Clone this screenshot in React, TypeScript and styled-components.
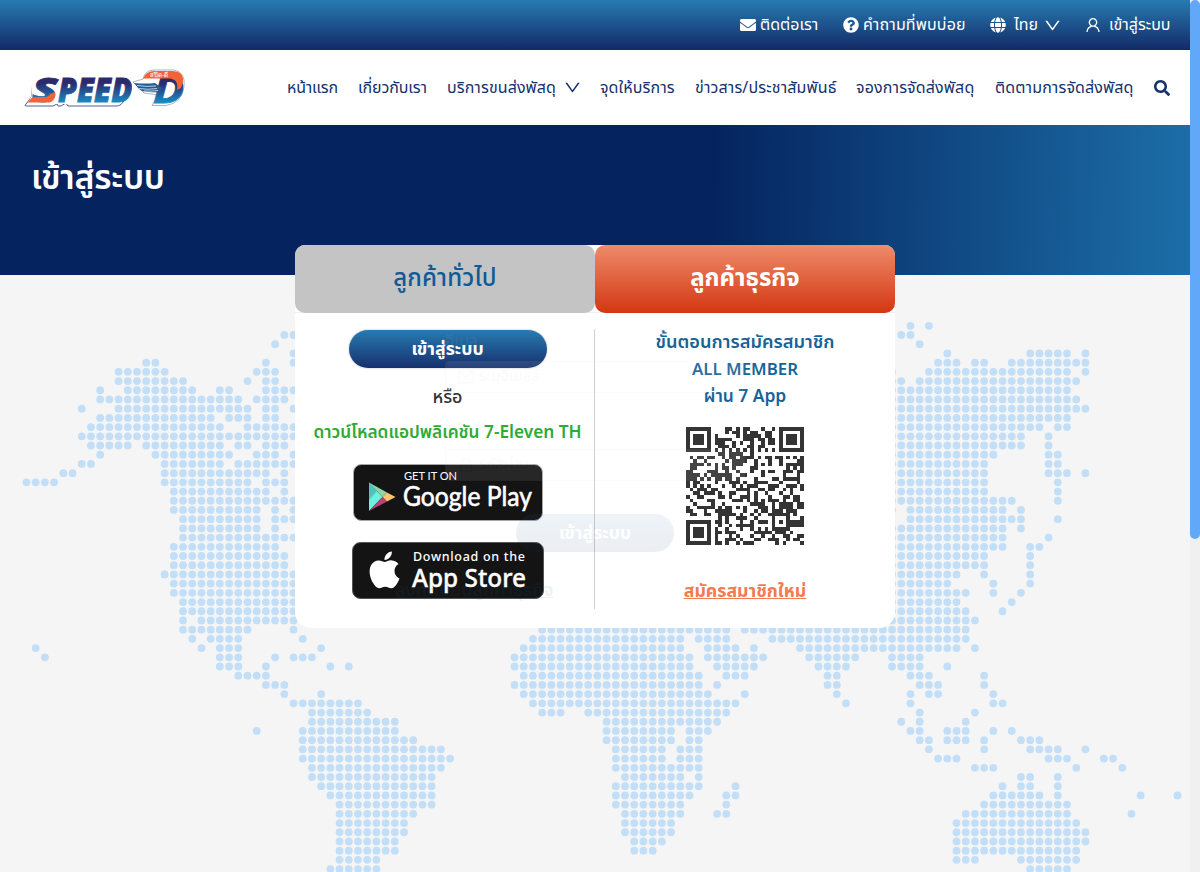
import React from "react";
import styled, { createGlobalStyle } from "styled-components";
import { FaEnvelope, FaQuestionCircle, FaGlobe, FaSearch } from "react-icons/fa";
import { AiOutlineDown, AiOutlineLock, AiOutlineMail, AiOutlineUser } from "react-icons/ai";

const thai = `"Noto Sans Thai", "Prompt", "Noto Sans", "Open Sans", sans-serif`;

const Global = createGlobalStyle`
  * { box-sizing: border-box; }
  html, body { margin: 0; height: 100%; overflow: hidden; }
  body { font-family: ${thai}; background: #f5f5f5; }
`;

const Shell = styled.div`
  display: flex;
  height: 872px;
  overflow: hidden;
`;
const Page = styled.div`
  flex: 1;
  min-width: 0;
  display: flex;
  flex-direction: column;
`;
const ScrollTrack = styled.div`
  width: 10px;
  background: #f0f0f0;
`;
const ScrollThumb = styled.div`
  height: 539px;
  border-radius: 5px;
  background: #62a8f8;
`;
const TopBar = styled.div`
  height: 50px;
  flex: none;
  padding: 0 20px;
  display: flex;
  justify-content: flex-end;
  align-items: center;
  gap: 24px;
  color: #fff;
  background: linear-gradient(#277bb1, #132a66);
`;
const Item = styled.div<{ $gap?: number }>`
  display: flex;
  align-items: center;
  gap: ${(p) => p.$gap ?? 4}px;
  svg {
    flex: none;
  }
`;
const Chevron = styled(AiOutlineDown)`
  width: 19px;
  height: 19px;
  margin: 0 -1.5px 0 -4.5px;
`;
const UserIcon = styled(AiOutlineUser)`
  width: 18px;
  height: 18px;
`;
const NavBar = styled.div`
  height: 75px;
  flex: none;
  padding: 0 20px 0 24px;
  display: flex;
  align-items: center;
  background: #fff;
  color: #14316b;
`;
const NavLinks = styled.div`
  margin-left: auto;
  display: flex;
  align-items: center;
  gap: 20px;
`;
const Label = styled.span<{ $w: number; $ls?: number }>`
  width: ${(p) => p.$w}px;
  font-size: 16px;
  letter-spacing: ${(p) => p.$ls ?? 0}px;
  line-height: 24px;
  white-space: nowrap;
`;
const Hero = styled.div`
  height: 150px;
  flex: none;
  padding: 28px 31px;
  background: linear-gradient(91deg, #05245f 60%, #1c6ea8 100%);
`;
const Title = styled.h1`
  margin: 0;
  color: #fff;
  font-size: 34px;
  font-weight: 600;
  letter-spacing: -0.25px;
  line-height: 52px;
  white-space: nowrap;
`;
const Body = styled.div`
  position: relative;
  height: 597px;
  flex: none;
  background: #f5f5f5;
`;
const MapLayer = styled.svg`
  position: absolute;
  inset: 0;
`;
const Card = styled.div`
  position: relative;
  width: 600px;
  height: 383px;
  margin: -30px auto 0;
  border-radius: 10px 10px 16px 16px;
  background: #fff;
`;
const Tabs = styled.div`
  display: flex;
  height: 68px;
  border-bottom: 1px solid #f0f0f0;
`;
const Tab = styled.div<{ $active?: boolean }>`
  flex: 1;
  height: 68px;
  border-radius: 10px;
  display: flex;
  justify-content: center;
  align-items: center;
  font-size: 24px;
  font-weight: ${(p) => (p.$active ? 700 : 500)};
  letter-spacing: ${(p) => (p.$active ? 0 : 0.15)}px;
  color: ${(p) => (p.$active ? "#fff" : "#0c5b96")};
  background: ${(p) => (p.$active ? "linear-gradient(#ee8b6b, #d33711)" : "#c4c4c4")};
  white-space: nowrap;
`;
const Columns = styled.div`
  display: flex;
  padding-top: 16px;
`;
const Left = styled.div`
  width: 300px;
  height: 280px;
  border-right: 1px solid #cfcfcf;
  display: flex;
  flex-direction: column;
  align-items: center;
  padding-left: 6px;
  white-space: nowrap;
`;
const Right = styled.div`
  width: 300px;
  display: flex;
  flex-direction: column;
  align-items: center;
  white-space: nowrap;
`;
const Pill = styled.div<{ $w: number }>`
  width: ${(p) => p.$w}px;
  height: 38px;
  flex: none;
  margin-top: 1px;
  padding-top: 1px;
  border-radius: 19px;
  display: flex;
  align-items: center;
  justify-content: center;
  color: #fff;
  font-size: 17.7px;
  font-weight: 700;
  background: linear-gradient(#277bb1, #17306d);
  box-shadow: 0 0 2px rgba(0, 0, 0, 0.35);
`;
const Or = styled.div`
  margin-top: 18px;
  font-size: 18px;
  font-weight: 500;
  line-height: 24px;
  color: #333;
`;
const Download = styled.div`
  margin-top: 11px;
  font-size: 17.25px;
  font-weight: 600;
  line-height: 24px;
  color: #2eab33;
`;
const Store = styled.svg<{ $top: number }>`
  flex: none;
  margin-top: ${(p) => p.$top}px;
`;
const Step = styled.div<{ $size: number }>`
  height: 27px;
  font-size: ${(p) => p.$size}px;
  font-weight: 600;
  line-height: 27px;
  color: #176397;
`;
const FirstStep = styled(Step)`
  line-height: 25px;
`;
const Steps = styled.div`
  padding-top: 1px;
  text-align: center;
`;
const Code = styled.svg`
  margin-top: 16px;
`;
const Join = styled.div`
  margin-top: 34px;
  font-size: 17.7px;
  font-weight: 700;
  line-height: 26px;
  color: #f47a52;
  text-decoration: underline;
`;
/* Outgoing business form, still fading while the general tab is shown */
const Fading = styled.div`
  position: absolute;
  left: 150px;
  top: 84px;
  width: 300px;
  display: flex;
  flex-direction: column;
  opacity: 0.08;
  font-size: 16px;
  line-height: 24px;
  color: #ccc;
  white-space: nowrap;
  pointer-events: none;
`;
const Field = styled.div`
  height: 32px;
  margin: 8px 0 24px;
  padding-left: 11px;
  border: 1px solid #d9d9d9;
  border-radius: 4px;
  display: flex;
  align-items: center;
  gap: 4px;
  font-size: 15px;
  background: #fff;
`;
const FadingPill = styled(Pill)`
  margin: 9px 0 0 71px;
  box-shadow: none;
`;
const FadingLink = styled.div`
  margin: 27px 0 0 -50px;
  font-size: 18px;
  font-weight: 600;
  color: #176397;
  text-decoration: underline;
`;

type Run = number | [number, number];
const mapRows: Run[][] = [
  [96, 98],
  [28, 29, 95, 96],
  [27, 97],
  [29, 100, [109, 113], 115],
  [13, 14, 26, 29, [99, 101], 103, 104, [107, 115]],
  [[10, 15], [25, 27], 94, [98, 113], 115],
  [[10, 17], 24, 26, 27, 94, 95, [97, 114]],
  [8, [11, 18], 21, 22, [26, 29], [94, 113]],
  [[8, 23], [25, 28], [94, 114]],
  [6, [10, 24], 26, 27, 29, [94, 115]],
  [[8, 20], [22, 24], 26, 27, [94, 113]],
  [[7, 21], [24, 29], [94, 110], 112, 113],
  [[6, 29], [94, 108], 111],
  [[7, 11], [13, 21], 23, 24, [26, 28], [94, 108], 111],
  [8, [14, 22], [25, 27], 29, [94, 105], 111, 112],
  [6, 7, [15, 21], [23, 29], [94, 104], 111, 112],
  [4, 5, [15, 26], 28, [94, 104], [111, 113], 115],
  [[0, 3], [15, 24], [26, 28], [94, 104], 112],
  [[16, 26], 28, [94, 104], 112],
  [[16, 29], [94, 107], 112],
  [[16, 25], 27, 29, 94, [96, 106], 108],
  [[17, 25], [27, 29], [96, 108], 112],
  [[17, 25], 27, [94, 106], 108],
  [[17, 29], [94, 106], 111],
  [[16, 27], [94, 106], 109, 110],
  [[16, 28], [94, 104], 109],
  [[16, 28], [94, 104], 109],
  [[15, 29], [94, 101], 104, 109],
  [[16, 29], [94, 100], 105, 109],
  [[16, 29], [94, 102], 105, 108],
  [[17, 29], [94, 101], 107],
  [[17, 29], [94, 102], 106],
  [17, [19, 29], [94, 103]],
  [[17, 24], 29, [56, 76], [78, 102]],
  [18, [20, 23], 30, [55, 71], [73, 76], [81, 102]],
  [1, 19, [21, 23], 32, [54, 71], [74, 77], 79, [84, 101], 103],
  [2, [21, 23], 27, [29, 31], [53, 72], [74, 80], [85, 90], [94, 97]],
  [[21, 23], 26, 33, 35, [53, 72], [75, 79], [86, 89], [94, 97], 100],
  [[23, 26], [54, 73], [76, 78], 87, 88, [96, 98], 104],
  [[26, 28], [53, 73], 75, 87, 88, [97, 99], 104],
  [28, 32, [54, 74], 78, 88, 96, 98, 99, 105],
  [[29, 36], [55, 77], 89, 96, 105, 106],
  [[31, 37], [56, 58], [61, 76], 97, 103],
  [[31, 40], [63, 75], 95, 97, 102],
  [25, [30, 40], [63, 70], [72, 74], 96, 97, [100, 102], 105, 107],
  [[30, 42], [63, 70], 72, 73, 97, 98, [100, 102], 104, [108, 110]],
  [[30, 45], [64, 69], [71, 73], 98, 104, [109, 112], 115],
  [[30, 46], [64, 69], [71, 73], [99, 101], [111, 113], 117, 118],
  [[31, 45], [64, 73], [103, 105], 114, 119],
  [[31, 44], [65, 71], 73, 108, 109, 112],
  [[32, 44], [64, 73], 77, 106, 108, 109, 112],
  [[33, 44], [64, 72], 76, 77, [105, 110], 112, 121, 125],
  [[34, 44], [64, 71], 76, [104, 113]],
  [[34, 42], [65, 71], 75, 76, [102, 113], 120],
  [[34, 41], [65, 70], [101, 114]],
  [[34, 41], [65, 70], [101, 115]],
  [[34, 40], [66, 69], [101, 115]],
  [[34, 40], [66, 68], [101, 114]],
  [[34, 38], [101, 103], [108, 114]],
  [[33, 38], [109, 113]],
];
const PITCH = 9.208;

const WorldMap = () => (
  <MapLayer width="1190" height="597" fill="#c3dff7">
    {mapRows.flatMap((row, r) =>
      row.flatMap((run) => {
        const [a, b] = typeof run === "number" ? [run, run] : run;
        return Array.from({ length: b - a + 1 }, (_, i) => (
          <circle key={`${r}-${a + i}`} cx={26.5 + (a + i) * PITCH} cy={50.8 + r * PITCH} r="3.9" />
        ));
      })
    )}
  </MapLayer>
);

const QR_SIZE = 33;
const ring = (x: number, y: number, cx: number, cy: number) => Math.max(Math.abs(x - cx), Math.abs(y - cy));
const isDark = (x: number, y: number) => {
  for (const [cx, cy] of [[3, 3], [29, 3], [3, 29]]) {
    const d = ring(x, y, cx, cy);
    if (d <= 4) return d !== 2 && d !== 4;
  }
  const a = ring(x, y, 26, 26);
  if (a <= 2) return a !== 1;
  if (x === 6 || y === 6) return (x + y) % 2 === 0;
  let h = (x * 374761393 + y * 668265263) | 0;
  h = Math.imul(h ^ (h >>> 13), 1274126177);
  return ((h ^ (h >>> 16)) & 1) === 1;
};
const QrCode = () => {
  let d = "";
  for (let y = 0; y < QR_SIZE; y++) {
    for (let x = 0; x < QR_SIZE; x++) if (isDark(x, y)) d += `M${x} ${y}h1v1h-1z`;
  }
  return (
    <Code width="118" height="118" viewBox={`0 0 ${QR_SIZE} ${QR_SIZE}`} shapeRendering="crispEdges">
      <path d={d} fill="#343434" />
    </Code>
  );
};

const Logo = () => (
  <svg width="176" height="56" viewBox="0 -10 176 56">
    <defs>
      <linearGradient id="ink" gradientUnits="userSpaceOnUse" x1="0" y1="8" x2="0" y2="34">
        <stop offset="0.2" stopColor="#2b2a6c" />
        <stop offset="0.95" stopColor="#1a8cc4" />
      </linearGradient>
    </defs>
    <path d="M1 35.500L8 26L8 9L36 7L100 7Q111 12 106 24L97 34.500Q95 36 92 36H44L42 33L37 36H34L33 34L29 36H2Z" fill="#fff" stroke="#55628c" strokeWidth="1" />
    <path d="M4 33L8 25L6 6L36 5L100 5.500Q110 10 105 23L95 34H8Z" fill="#fff" />
    <path d="M109 12L119 9Q121 0 130 0H150Q162 2 160 17Q158 33 142 35.500H128L134 25L120 23Z" fill="#fff" stroke="#8a93b0" strokeWidth="0.7" />
    <g fontFamily="Noto Sans" fontWeight="900" fontStyle="italic" fill="url(#ink)" stroke="url(#ink)" strokeWidth="0.8">
      <text x="8" y="32" fontSize="33" textLength="26" lengthAdjust="spacingAndGlyphs">S</text>
      <text x="34" y="32" fontSize="33" textLength="74" lengthAdjust="spacingAndGlyphs">PEED</text>
      <text x="129" y="32.500" fontSize="35" fontWeight="700" textLength="31" lengthAdjust="spacingAndGlyphs">D</text>
    </g>
    <path d="M3.500 32.500L8.500 27H22Q25 26.500 26 24L31 22Q32 30 26 32.500Z" fill="#f26438" />
    <path d="M119 8.500Q122 1 130 1H148Q160 1 159 12L157 18L153 20Q155 9 145 8.500Z" fill="#f26438" />
    <path d="M110 13Q122 14 131 13L138 18L134 22Q119 23 115 19Z" fill="#245c94" />
    <path d="M113 15.500Q123 17 132 16M115 18.500Q124 20 133 18.500M120 21Q127 21.500 134 20.500" stroke="#dcecf8" strokeWidth="0.800" fill="none" />
    <text x="126" y="6.800" fontFamily="Noto Sans" fontSize="6" fontWeight="700" fill="#ffe3d5" textLength="18" lengthAdjust="spacingAndGlyphs">สปีด-ดี</text>
  </svg>
);

const PlayBadge = () => (
  <Store $top={19} width="190" height="57" viewBox="0 0 190 57">
    <rect x="0.5" y="0.5" width="189" height="56" rx="8" fill="#141414" stroke="#a6a6a6" />
    <path d="M16 18.500L29.500 33L16 47Z" fill="#6ff0dc" />
    <path d="M16 18.500L34 28.500L29.500 33Z" fill="#8fd6a4" />
    <path d="M16 18.500L24 27L16 36Z" fill="#55bfc4" />
    <path d="M34 28.500L42.500 33L34 37.500L29.500 33Z" fill="#fdc26b" />
    <path d="M16 47L29.500 33L34 37.500Z" fill="#c13f79" />
    <g fill="#fff">
      <text x="51" y="16" fontFamily="Lato" fontSize="11.500" textLength="53" lengthAdjust="spacingAndGlyphs">GET IT ON</text>
      <text x="50" y="41.500" fontFamily="Lato" fontSize="26" textLength="129" lengthAdjust="spacingAndGlyphs" stroke="#fff" strokeWidth="0.6">Google Play</text>
    </g>
  </Store>
);

const AppleBadge = () => (
  <Store $top={21} width="192" height="57" viewBox="0 0 192 57">
    <rect x="0.5" y="0.5" width="191" height="56" rx="8" fill="#141414" stroke="#555" />
    <path transform="translate(10.500 5.800) scale(1.840)" fill="#fff" d="M18.710 19.500c-.830 1.240-1.710 2.450-3.050 2.470-1.340.030-1.770-.790-3.290-.790-1.530 0-2 .770-3.270.820-1.310.050-2.300-1.320-3.140-2.530C4.250 17 2.940 12.450 4.700 9.390c.870-1.520 2.430-2.480 4.120-2.510 1.280-.020 2.500.870 3.290.870.780 0 2.260-1.070 3.810-.910.650.030 2.470.260 3.640 1.980-.090.060-2.170 1.280-2.150 3.810.030 3.020 2.650 4.030 2.680 4.040-.030.070-.420 1.440-1.380 2.830M13 3.500c.730-.830 1.940-1.460 2.940-1.500.130 1.170-.340 2.350-1.040 3.190-.690.850-1.830 1.510-2.950 1.420-.150-1.150.410-2.350 1.050-3.110z" />
    <g fill="#fff" fontFamily="Noto Sans">
      <text x="61" y="19" fontSize="12.500" fontWeight="500" textLength="112">Download on the</text>
      <text x="60" y="44.500" fontSize="26" fontWeight="500" textLength="114" lengthAdjust="spacingAndGlyphs" stroke="#fff" strokeWidth="0.4">App Store</text>
    </g>
  </Store>
);

export default function App() {
  return (
    <>
      <Global />
      <Shell>
        <Page>
          <TopBar>
            <Item><FaEnvelope size={16} /><Label $w={59}>ติดต่อเรา</Label></Item>
            <Item><FaQuestionCircle size={16} /><Label $w={103} $ls={0.15}>คำถามที่พบบ่อย</Label></Item>
            <Item $gap={8}><FaGlobe size={16} /><Label $w={25}>ไทย</Label><Chevron /></Item>
            <Item $gap={7}><UserIcon /><Label $w={61}>เข้าสู่ระบบ</Label></Item>
          </TopBar>
          <NavBar>
            <Logo />
            <NavLinks>
              <Label $w={51} $ls={-0.2}>หน้าแรก</Label>
              <Label $w={69} $ls={-0.1}>เกี่ยวกับเรา</Label>
              <Item $gap={11}><Label $w={109} $ls={0.1}>บริการขนส่งพัสดุ</Label><Chevron /></Item>
              <Label $w={75} $ls={0.1}>จุดให้บริการ</Label>
              <Label $w={141} $ls={0.13}>ข่าวสาร/ประชาสัมพันธ์</Label>
              <Label $w={119} $ls={0.15}>จองการจัดส่งพัสดุ</Label>
              <Label $w={139} $ls={0.12}>ติดตามการจัดส่งพัสดุ</Label>
              <FaSearch size={16} />
            </NavLinks>
          </NavBar>
          <Hero><Title>เข้าสู่ระบบ</Title></Hero>
          <Body>
            <WorldMap />
            <Card>
              <Tabs><Tab>ลูกค้าทั่วไป</Tab><Tab $active>ลูกค้าธุรกิจ</Tab></Tabs>
              <Columns>
                <Left>
                  <Pill $w={198}>เข้าสู่ระบบ</Pill>
                  <Or>หรือ</Or>
                  <Download>ดาวน์โหลดแอปพลิเคชัน 7-Eleven TH</Download>
                  <PlayBadge />
                  <AppleBadge />
                </Left>
                <Right>
                  <Steps>
                    <FirstStep $size={18.2}>ขั้นตอนการสมัครสมาชิก</FirstStep>
                    <Step $size={16.8}>ALL MEMBER</Step>
                    <Step $size={17.4}>ผ่าน 7 App</Step>
                  </Steps>
                  <QrCode />
                  <Join>สมัครสมาชิกใหม่</Join>
                </Right>
              </Columns>
              <Fading>
                <span>อีเมล</span>
                <Field><AiOutlineMail size={18} />ระบุอีเมลล์</Field>
                <span>รหัสผ่าน</span>
                <Field><AiOutlineLock size={18} />รหัสผ่าน</Field>
                <FadingPill $w={158}>เข้าสู่ระบบ</FadingPill>
                <FadingLink>ลงทะเบียนลูกค้าธุรกิจ</FadingLink>
              </Fading>
            </Card>
          </Body>
        </Page>
        <ScrollTrack><ScrollThumb /></ScrollTrack>
      </Shell>
    </>
  );
}
